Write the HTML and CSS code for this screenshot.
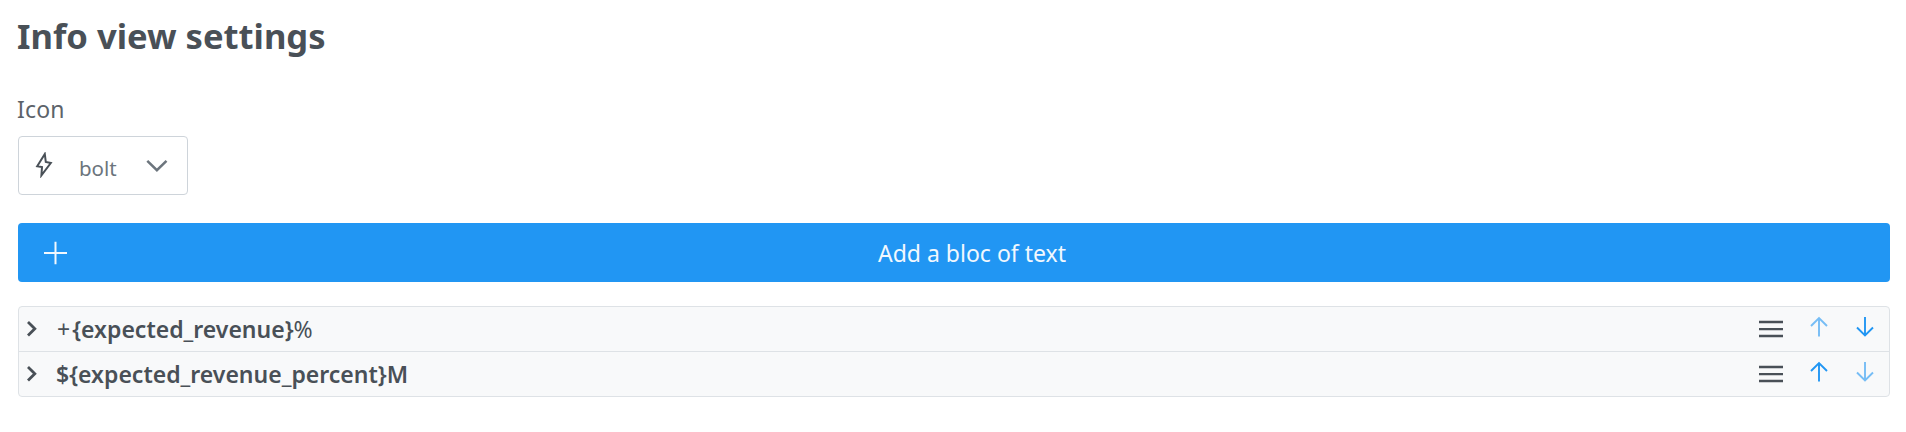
FILE: index.html
```html
<!DOCTYPE html>
<html lang="en">
<head>
<meta charset="utf-8">
<title>Info view settings</title>
<link rel="stylesheet" href="styles.css">
</head>
<body>
<main class="settings">
  <h1 class="title">Info view settings</h1>
  <div class="label"><span>Icon</span></div>
  <div class="select">
    <svg class="bolt" width="18" height="26" viewBox="0 0 18 26"><path d="M9.8 2 2.2 14.2l4.8.8-.6 8.4L15.8 11l-5-1Z"/></svg>
    <span class="value">bolt</span>
    <svg class="chevron" width="24" height="14" viewBox="0 0 24 14"><path d="m2.3 1.8 9.6 9.4 9.6-9.4"/></svg>
  </div>
  <button class="add" type="button">
    <svg class="plus" width="24" height="24" viewBox="0 0 24 24"><path d="M12.5.7v22.6M1 12h23"/></svg>
    <span class="add-text">Add a bloc of text</span>
  </button>
  <div class="list">
    <div class="row">
      <svg class="caret" width="12" height="18" viewBox="0 0 12 18"><path d="m2 2 6.8 6.8L2 15.6"/></svg>
      <span class="name first"><span class="light sign">+</span>{expected_revenue}<span class="light">%</span></span>
      <svg class="menu" width="24" height="18" viewBox="0 0 24 18"><path d="M0 2h24M0 9.2h24M0 16h24"/></svg>
      <svg class="arrow off" width="20" height="22" viewBox="0 0 20 22"><path d="M10 20.5V2M2 10l8-8 8 8"/></svg>
      <svg class="arrow" width="20" height="22" viewBox="0 0 20 22"><path d="M10 1v18.5M2 11.5l8 8 8-8"/></svg>
    </div>
    <div class="row">
      <svg class="caret" width="12" height="18" viewBox="0 0 12 18"><path d="m2 2 6.8 6.8L2 15.6"/></svg>
      <span class="name second">${expected_revenue_percent}M</span>
      <svg class="menu" width="24" height="18" viewBox="0 0 24 18"><path d="M0 2h24M0 9.2h24M0 16h24"/></svg>
      <svg class="arrow" width="20" height="22" viewBox="0 0 20 22"><path d="M10 20.5V2M2 10l8-8 8 8"/></svg>
      <svg class="arrow off" width="20" height="22" viewBox="0 0 20 22"><path d="M10 1v18.5M2 11.5l8 8 8-8"/></svg>
    </div>
  </div>
</main>
</body>
</html>
```
FILE: styles.css
```css
* { box-sizing: border-box; }
body { margin: 0; background: #fff; color: #495057; font-family: "Noto Sans", sans-serif; }
svg { display: block; flex: none; fill: none; stroke: currentColor; }
.settings { padding: 12px 16px 0 18px; }
.title { margin: 0 0 0 -1px; height: 48px; font-size: 34.6px; line-height: 48px; font-weight: 700; white-space: nowrap; }
.label { margin: 33px 0 0 -1px; height: 32px; font-size: 23px; line-height: 32px; letter-spacing: .2px; color: #5c636a; }
.select { display: flex; align-items: center; width: 170px; height: 59px; margin-top: 11px; padding: 0 18px 0 16px; border: 1px solid #ced4da; border-radius: 4px; color: #6c757d; }
.bolt { color: #495057; stroke-width: 2; margin-top: -2px; }
.value { width: 59px; margin-left: 26px; padding-top: 4px; font-size: 20.5px; line-height: 28px; }
.chevron { margin-left: 9px; stroke-width: 2.5; }
.add { display: flex; align-items: center; width: 100%; height: 59px; margin-top: 28px; padding: 0 13px 0 25px; border: 0; border-radius: 4px; background: #2196f3; color: #f1f8fe; font: 400 23px/32px "Noto Sans", sans-serif; }
.plus { stroke-width: 2; margin-top: 1px; }
.add-text { flex: 1; text-align: center; padding-top: 1px; }
.list { margin-top: 24px; border: 1px solid #dee2e6; border-radius: 4px; background: #f8f9fa; overflow: hidden; }
.row { display: flex; align-items: center; height: 44px; padding: 0 14px 0 7px; }
.row + .row { height: 45px; border-top: 1px solid #dee2e6; }
.caret { stroke-width: 2.8; }
.name { flex: 1; margin-left: 19px; padding-bottom: 1px; font-size: 23px; line-height: 32px; font-weight: 600; white-space: nowrap; }
.second { margin-left: 18px; }
.light { font-weight: 400; }
.sign { margin-right: 2px; }
.menu { stroke-width: 2.3; }
.arrow { margin: -4px 0 0 26px; color: #2196f3; stroke-width: 1.9; }
.off { opacity: .6; }
```
